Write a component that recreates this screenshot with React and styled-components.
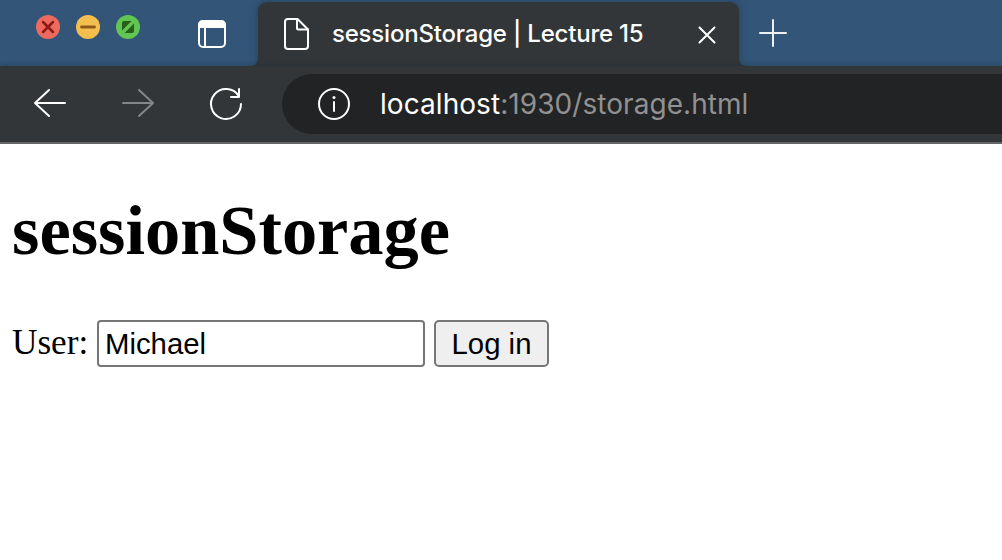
import React from "react";
import styled, { createGlobalStyle } from "styled-components";

const GlobalStyle = createGlobalStyle`
  *, *::before, *::after { box-sizing: border-box; }
  body { margin: 0; background: #fff; overflow: hidden; }
`;

const Browser = styled.div`
  width: 1002px;
  height: 560px;
  display: flex;
  flex-direction: column;
  overflow: hidden;
  background: #fff;
`;

const TitleBar = styled.header`
  height: 66px;
  flex: none;
  display: flex;
  align-items: flex-start;
  background: #335577;
`;

const TrafficLights = styled.div`
  display: flex;
  gap: 16px;
  padding: 15px 0 0 36px;
`;

const Light = styled.svg`
  display: block;
  width: 24px;
  height: 24px;
  border-radius: 50%;
  background: ${(p) => p.$color};
`;

const Icon = styled.svg`
  display: block;
  flex: none;
  width: ${(p) => p.$w}px;
  height: ${(p) => p.$h}px;
  margin: ${(p) => p.$margin || "0"};
  fill: none;
  stroke: ${(p) => p.$color || "#fff"};
  stroke-width: 2;
  stroke-linecap: round;
  stroke-linejoin: round;
  overflow: visible;
`;

const Tab = styled.div`
  position: relative;
  width: 481px;
  height: 64px;
  margin: 2px 0 0 32px;
  padding-left: 26px;
  display: flex;
  align-items: flex-start;
  background: #333638;
  border-radius: 9px 9px 0 0;
  box-shadow: 0 0 7px rgba(20, 45, 65, 0.55);

  &::before,
  &::after {
    content: "";
    position: absolute;
    bottom: 0;
    width: 7px;
    height: 7px;
  }
  &::before {
    left: -7px;
    background: radial-gradient(circle at 0 0, transparent 6.5px, #333638 7px);
  }
  &::after {
    right: -7px;
    background: radial-gradient(circle at 100% 0, transparent 6.5px, #333638 7px);
  }
`;

const TabTitle = styled.span`
  width: 312px;
  margin: 15px 0 0 23px;
  font: 500 24px/34px Inter, sans-serif;
  letter-spacing: -0.2px;
  color: #fff;
  white-space: nowrap;
`;

const Toolbar = styled.nav`
  position: relative;
  height: 78px;
  flex: none;
  display: flex;
  align-items: flex-start;
  padding: 8px 0 0 34px;
  background: #333638;
  border-bottom: 2px solid #666;
  box-shadow: 0 0 6px rgba(20, 45, 65, 0.55);
  clip-path: inset(-6px 0 0 0);
`;

const AddressBar = styled.div`
  flex: 1;
  height: 60px;
  margin-left: 40px;
  padding-left: 36px;
  display: flex;
  align-items: center;
  background: #222324;
  border-radius: 30px 0 0 30px;
`;

const Url = styled.span`
  margin-left: 30px;
  font: 400 28px/40px Inter, sans-serif;
  letter-spacing: 0.06px;
  color: #919191;
  white-space: nowrap;
`;

const Host = styled.span`
  color: #fff;
`;

const Page = styled.main`
  flex: 1;
  padding: 47px 0 0 12px;
  font-family: "Liberation Serif", serif;
  color: #000;
`;

const Heading = styled.h1`
  margin: 0;
  font-size: 70.4px;
  line-height: 78px;
  font-weight: 700;
`;

const Form = styled.form`
  display: flex;
  align-items: flex-start;
  margin-top: 51px;
  height: 47px;
`;

const Label = styled.label`
  width: 85px;
  padding-top: 3px;
  font-size: 35.2px;
  line-height: 40px;
`;

const Input = styled.input`
  width: 328px;
  height: 47px;
  margin: 0;
  padding: 0 6px;
  border: 2px solid #767676;
  border-radius: 4px;
  background: #fff;
  color: #000;
  font: 29.33px "Liberation Sans", sans-serif;
  outline: none;
`;

const Button = styled.button`
  width: 115px;
  height: 47px;
  margin: 0 0 0 9px;
  padding: 0;
  border: 2px solid #767676;
  border-radius: 5px;
  background: #efefef;
  color: #000;
  font: 29.33px "Liberation Sans", sans-serif;
`;

export default function App() {
  return (
    <>
      <GlobalStyle />
      <Browser>
        <TitleBar>
          <TrafficLights>
            <Light $color="#ed6a5f" viewBox="0 0 24 24">
              <path d="M7 7l10 10M17 7L7 17" stroke="#8b1a10" strokeWidth="2.500" strokeLinecap="round" />
            </Light>
            <Light $color="#f5bf4f" viewBox="0 0 24 24">
              <path d="M5.500 12h13" stroke="#90591d" strokeWidth="2.800" strokeLinecap="round" />
            </Light>
            <Light $color="#61c554" viewBox="0 0 24 24">
              <path d="M6 15.5V8a2 2 0 0 1 2-2h7.5zM18 8.5V16a2 2 0 0 1-2 2H8.5z" fill="#285e17" />
            </Light>
          </TrafficLights>
          <Icon $w={28} $h={28} $margin="20px 0 0 58px" viewBox="0 0 28 28">
            <rect x="1" y="1" width="26" height="26" rx="4" />
            <path d="M1 7V5a4 4 0 0 1 4-4h18a4 4 0 0 1 4 4v2z" fill="#fff" />
            <path d="M7 8v19" />
          </Icon>
          <Tab>
            <Icon $w={25} $h={32} $margin="16px 0 0" viewBox="0 0 25 32">
              <path d="M4 1h9.5L24 11.5V28a3 3 0 0 1-3 3H4a3 3 0 0 1-3-3V4a3 3 0 0 1 3-3z" />
              <path d="M13 1v9a1.5 1.5 0 0 0 1.500 1.500H24" />
            </Icon>
            <TabTitle>sessionStorage | Lecture 15</TabTitle>
            <Icon $w={18} $h={18} $margin="24px 0 0 54px" viewBox="0 0 18 18">
              <path d="M1.500 1.500l15 15M16.500 1.500l-15 15" />
            </Icon>
          </Tab>
          <Icon $w={28} $h={28} $margin="19px 0 0 20px" $color="#edf0f3" viewBox="0 0 28 28">
            <path d="M14 1v26M1 14h26" />
          </Icon>
        </TitleBar>
        <Toolbar>
          <Icon $w={32} $h={28} $margin="15px 0 0" viewBox="0 0 32 28">
            <path d="M15 1L1 14l14 13M1 14h30" />
          </Icon>
          <Icon $w={32} $h={28} $margin="15px 0 0 56px" $color="#848688" viewBox="0 0 32 28">
            <path d="M17 1l14 13-14 13M31 14H1" />
          </Icon>
          <Icon $w={32} $h={32} $margin="14px 0 0 56px" viewBox="0 0 32 32">
            <path d="M31 16A15 15 0 1 1 29 8.500M29 1v8h-8" />
          </Icon>
          <AddressBar>
            <Icon $w={32} $h={32} viewBox="0 0 32 32">
              <circle cx="16" cy="16" r="15" />
              <path d="M16 14v9" />
              <circle cx="16" cy="9.500" r="1.500" fill="#fff" stroke="none" />
            </Icon>
            <Url>
              <Host>localhost</Host>:1930/storage.html
            </Url>
          </AddressBar>
        </Toolbar>
        <Page>
          <Heading>sessionStorage</Heading>
          <Form onSubmit={(e) => e.preventDefault()}>
            <Label htmlFor="user">User:</Label>
            <Input id="user" type="text" defaultValue="Michael" spellCheck={false} />
            <Button type="submit">Log in</Button>
          </Form>
        </Page>
      </Browser>
    </>
  );
}
